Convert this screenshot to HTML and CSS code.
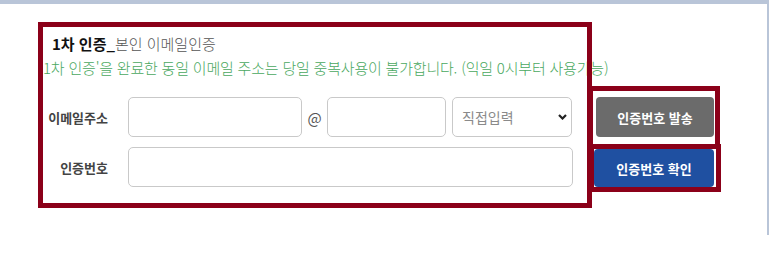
FILE: index.html
```html
<!DOCTYPE html>
<html lang="ko">
<head>
    <meta charset="UTF-8">
    <title>본인 이메일인증</title>
    <link rel="stylesheet" href="styles.css">
</head>
<body>
<div class="page">
    <div class="auth-box">
        <div class="auth-title"><b>1차 인증_</b>본인 이메일인증</div>
        <div class="auth-notice">1차 인증'을 완료한 동일 이메일 주소는 당일 중복사용이 불가합니다. (익일 0시부터 사용가능)</div>
        <div class="auth-form">
            <div class="form-row">
                <label class="form-label">이메일주소</label>
                <input type="text" class="field field--id">
                <span class="at-mark">@</span>
                <input type="text" class="field field--domain">
                <div class="field field--select">
                    <select class="domain-select">
                        <option>직접입력</option>
                        <option>naver.com</option>
                        <option>gmail.com</option>
                    </select>
                    <svg class="chevron" width="9" height="6" viewBox="0 0 9 6">
                        <path d="M1 1 L4.5 4.5 L8 1" fill="none" stroke="#222" stroke-width="2.2"/>
                    </svg>
                </div>
            </div>
            <div class="form-row">
                <label class="form-label">인증번호</label>
                <input type="text" class="field field--code">
            </div>
        </div>
    </div>
    <div class="btn-col">
        <div class="btn-box btn-box--send">
            <button class="btn btn--send">인증번호 발송</button>
        </div>
        <div class="btn-box btn-box--check">
            <button class="btn btn--check">인증번호 확인</button>
        </div>
    </div>
</div>
</body>
</html>
```

FILE: styles.css
```css
*{
    box-sizing: border-box;
    margin:0;
    padding:0;
}
body{
    background-color: #fff;
    font-family: "Noto Sans CJK KR", "Noto Sans", sans-serif;
    color:#222;
}
.page{
    width:769px;
    height:235px;
    border-top:4px solid #b9c5d8;
    border-right:2px solid #b9c5d8;
    display:flex;
    align-items:flex-start;
}
.auth-box{
    width:554px;
    margin:18px 0 0 38px;
    padding:5px;
    outline:5px solid #8b0019;
    outline-offset:-5px;
}
.auth-title{
    margin-top:5px;
    padding-left:9px;
    font-size:15px;
    line-height:24px;
    font-weight:300;
    color:#555;
}
.auth-title b{
    font-weight:bold;
    color:#111;
}
.auth-notice{
    font-size:15px;
    line-height:24px;
    font-weight:300;
    letter-spacing:-0.2px;
    color:#4aa860;
    white-space:nowrap;
}
.auth-form{
    margin-top:17px;
    padding-bottom:16px;
}
.form-row{
    display:flex;
    align-items:center;
    height:40px;
}
.form-row + .form-row{
    margin-top:10px;
}
.form-label{
    width:65px;
    margin-right:20px;
    text-align:right;
    font-size:13px;
    font-weight:bold;
    color:#444;
}
.field{
    height:40px;
    border:1px solid #c9c9c9;
    border-radius:5px;
    background:#fff;
    font-family:inherit;
}
.field--id{
    width:174px;
}
.at-mark{
    width:25px;
    text-align:center;
    font-size:15px;
    color:#555;
}
.field--domain{
    width:119px;
}
.field--select{
    width:120px;
    margin-left:6px;
    display:flex;
    align-items:center;
    padding:0 4px 0 9px;
}
.domain-select{
    flex:1;
    appearance:none;
    -webkit-appearance:none;
    border:none;
    outline:none;
    background:transparent;
    font-family:inherit;
    font-size:14px;
    color:#8a8a8a;
}
.field--code{
    width:445px;
}
.btn-col{
    margin:82px 0 0 -4px;
    display:flex;
    flex-direction:column;
}
.btn-box{
    width:132px;
    outline:5px solid #8b0019;
    outline-offset:-5px;
}
.btn-box--send{
    padding:11px 6px 12px 8px;
}
.btn-box--check{
    margin:-5px 0 0 1px;
    padding:5px 7px 5px 5px;
}
.btn{
    display:block;
    border:none;
    border-radius:4px;
    color:#fff;
    font-family:inherit;
    font-size:13px;
    font-weight:bold;
}
.btn--send{
    width:118px;
    height:40px;
    background-color:#6b6b6b;
}
.btn--check{
    width:120px;
    height:38px;
    background-color:#1f50a1;
}
```
